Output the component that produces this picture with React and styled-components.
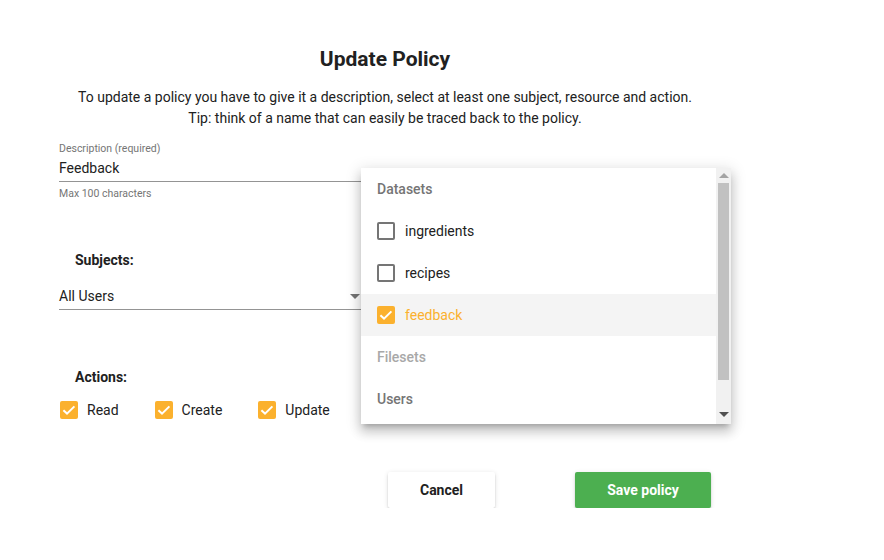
import React from "react";
import styled, { createGlobalStyle } from "styled-components";

const GlobalStyle = createGlobalStyle`
  html, body { margin: 0; padding: 0; background: #fff; }
  body { font-family: Roboto, "Noto Sans", sans-serif; color: #212121; }
  * { box-sizing: border-box; }
`;

const ORANGE = "#fbb12e";

const Dialog = styled.div`
  position: relative;
  width: 652px;
  margin-left: 59px;
  padding-top: 47px;
`;

const Title = styled.h2`
  margin: 0;
  font-size: 21px;
  line-height: 24px;
  font-weight: 700;
  text-align: center;
  color: #212121;
`;

const Intro = styled.p`
  margin: 16px 0 0;
  font-size: 14px;
  line-height: 21px;
  text-align: center;
  color: #212121;
`;

const Field = styled.div`
  width: 302px;
  margin-top: ${(p) => p.$top || 0}px;
`;

const FieldLabel = styled.div`
  font-size: 10.5px;
  line-height: 13px;
  color: #757575;
`;

const InputLine = styled.div`
  height: 27px;
  display: flex;
  align-items: center;
  font-size: 14px;
  color: #212121;
  border-bottom: 1px solid rgba(0, 0, 0, 0.42);
  position: relative;
`;

const Helper = styled.div`
  margin-top: 5px;
  font-size: 10.5px;
  line-height: 13px;
  color: #757575;
`;

const SectionLabel = styled.div`
  margin-top: ${(p) => p.$top}px;
  padding-left: 16px;
  font-size: 14px;
  line-height: 17px;
  font-weight: 700;
  color: #212121;
`;

const Arrow = styled.span`
  position: absolute;
  right: 1px;
  top: 11px;
  width: 0;
  height: 0;
  border-left: 5px solid transparent;
  border-right: 5px solid transparent;
  border-top: 5px solid #757575;
`;

const CheckRow = styled.div`
  margin-top: 15px;
  display: flex;
  align-items: center;
  gap: 36px;
  padding-left: 1px;
`;

const CheckItem = styled.label`
  display: flex;
  align-items: center;
  gap: ${(p) => p.$gap || 9}px;
  font-size: 14px;
  line-height: 18px;
  color: ${(p) => (p.$active ? ORANGE : "#212121")};
`;

const Box = styled.span`
  width: 18px;
  height: 18px;
  border-radius: 2px;
  flex: none;
  display: flex;
  align-items: center;
  justify-content: center;
  background: ${(p) => (p.$checked ? ORANGE : "transparent")};
  border: ${(p) => (p.$checked ? "none" : "2px solid #757575")};
`;

const Check = ({ checked }) => (
  <Box $checked={checked}>
    {checked && (
      <svg width="18" height="18" viewBox="0 0 18 18">
        <path d="M3.4 9.2 L7 12.6 L14.4 5.4" fill="none" stroke="#fff" strokeWidth="2" />
      </svg>
    )}
  </Box>
);

const Buttons = styled.div`
  margin-top: 53px;
  display: flex;
  justify-content: flex-end;
  gap: 80px;
`;

const Button = styled.button`
  height: 36px;
  width: ${(p) => p.$w}px;
  border: none;
  border-radius: 2px;
  font-family: Roboto, sans-serif;
  font-size: 14px;
  font-weight: 700;
  background: ${(p) => (p.$primary ? "#4caf50" : "#fff")};
  color: ${(p) => (p.$primary ? "#fff" : "#212121")};
  box-shadow: 0 3px 1px -2px rgba(0, 0, 0, 0.2), 0 2px 2px 0 rgba(0, 0, 0, 0.14),
    0 1px 5px 0 rgba(0, 0, 0, 0.12);
`;

const Menu = styled.div`
  position: absolute;
  left: 302px;
  top: 168px;
  width: 370px;
  height: 256px;
  background: #fff;
  display: flex;
  box-shadow: 0 5px 5px -3px rgba(0, 0, 0, 0.2), 0 8px 10px 1px rgba(0, 0, 0, 0.14),
    0 3px 14px 2px rgba(0, 0, 0, 0.12);
  overflow: hidden;
`;

const MenuList = styled.div`
  flex: 1;
  display: flex;
  flex-direction: column;
`;

const MenuItem = styled.div`
  height: 42px;
  flex: none;
  display: flex;
  align-items: center;
  padding-left: 16px;
  font-size: 14px;
  background: ${(p) => (p.$selected ? "#f4f4f4" : "transparent")};
`;

const GroupHeader = styled(MenuItem)`
  font-weight: 500;
  color: ${(p) => (p.$disabled ? "#a8a8a8" : "#757575")};
`;

const Scrollbar = styled.div`
  width: 15px;
  flex: none;
  background: #f1f1f1;
  display: flex;
  flex-direction: column;
  align-items: center;
  padding: 5px 0 7px;
`;

const ScrollArrow = styled.span`
  width: 0;
  height: 0;
  border-left: 5px solid transparent;
  border-right: 5px solid transparent;
  ${(p) =>
    p.$down
      ? "border-top: 5px solid #505050; margin-top: auto;"
      : "border-bottom: 5px solid #a3a3a3;"}
`;

const Thumb = styled.span`
  width: 11px;
  height: 197px;
  margin-top: 5px;
  background: #c1c1c1;
`;

export default function App() {
  return (
    <>
      <GlobalStyle />
      <Dialog>
        <Title>Update Policy</Title>
        <Intro>
          To update a policy you have to give it a description, select at least one subject, resource and action.
          <br />
          Tip: think of a name that can easily be traced back to the policy.
        </Intro>

        <Field $top={13}>
          <FieldLabel>Description (required)</FieldLabel>
          <InputLine>Feedback</InputLine>
          <Helper>Max 100 characters</Helper>
        </Field>

        <SectionLabel $top={52}>Subjects:</SectionLabel>
        <Field $top={14}>
          <InputLine>
            All Users
            <Arrow />
          </InputLine>
        </Field>

        <SectionLabel $top={59}>Actions:</SectionLabel>
        <CheckRow>
          <CheckItem>
            <Check checked />
            Read
          </CheckItem>
          <CheckItem>
            <Check checked />
            Create
          </CheckItem>
          <CheckItem>
            <Check checked />
            Update
          </CheckItem>
        </CheckRow>

        <Buttons>
          <Button $w={107}>Cancel</Button>
          <Button $w={136} $primary>
            Save policy
          </Button>
        </Buttons>

        <Menu>
          <MenuList>
            <GroupHeader>Datasets</GroupHeader>
            <MenuItem>
              <CheckItem $gap={10}>
                <Check />
                ingredients
              </CheckItem>
            </MenuItem>
            <MenuItem>
              <CheckItem $gap={10}>
                <Check />
                recipes
              </CheckItem>
            </MenuItem>
            <MenuItem $selected>
              <CheckItem $gap={10} $active>
                <Check checked />
                feedback
              </CheckItem>
            </MenuItem>
            <GroupHeader $disabled>Filesets</GroupHeader>
            <GroupHeader>Users</GroupHeader>
          </MenuList>
          <Scrollbar>
            <ScrollArrow />
            <Thumb />
            <ScrollArrow $down />
          </Scrollbar>
        </Menu>
      </Dialog>
    </>
  );
}
